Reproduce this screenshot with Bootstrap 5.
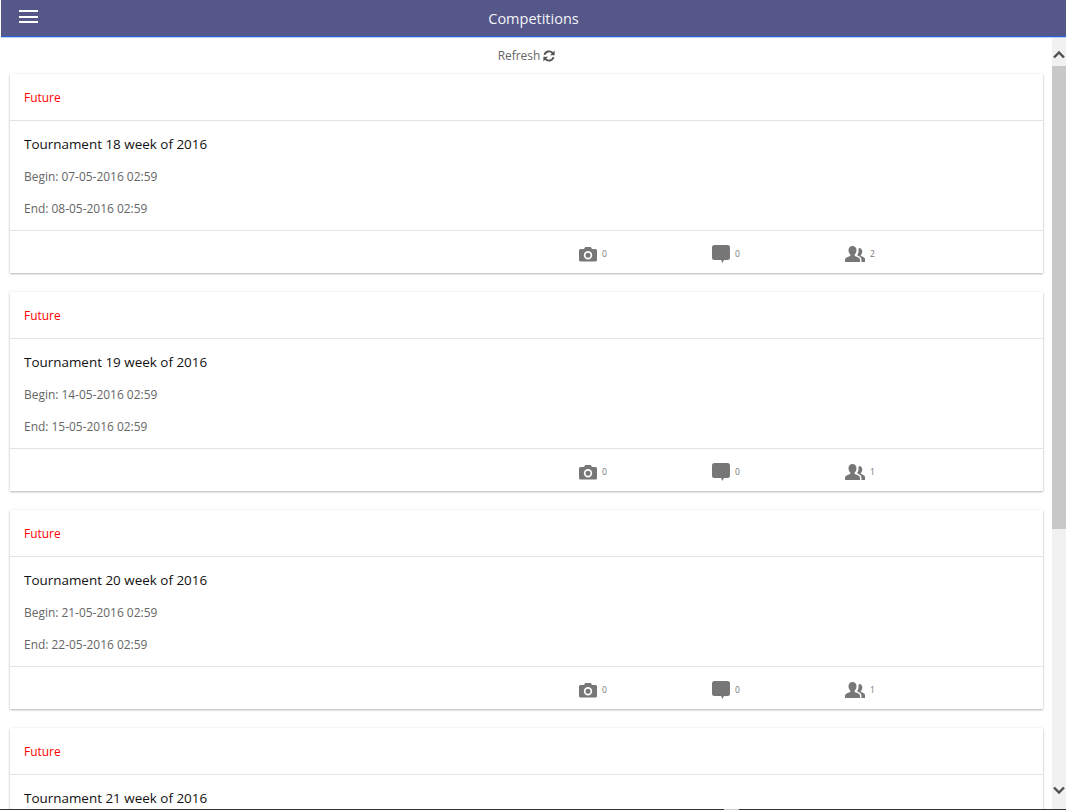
<!DOCTYPE html>
<html lang="en">
<head>
<meta charset="utf-8">
<title>Competitions</title>
<link href="https://cdn.jsdelivr.net/npm/bootstrap@5.3.0/dist/css/bootstrap.min.css" rel="stylesheet">
<style>
html,body{height:810px;overflow:hidden;background:#fff;}
body{font-family:"Open Sans","Noto Sans",sans-serif;font-size:11.95px;color:#666;position:relative;}
.appbar{height:37px;margin-left:1px;background:#555789;border-bottom:1px solid #2a62d2;box-shadow:0 1px 0 #b5d0f5;position:relative;z-index:2;}
.appbar-title{color:#f3f3f8;font-size:14.5px;line-height:37px;}
.burger{width:19px;height:13px;display:flex;flex-direction:column;justify-content:space-between;position:absolute;left:18px;top:10px;}
.burger span{display:block;height:2px;background:#fff;}
.shell{height:773px;}
.feed{overflow:hidden;min-width:0;padding:0 9px 0 10px;}
.refresh-row{height:37px;color:#666;}
.refresh-row svg{width:12px;height:12px;margin-left:3px;}
.comp{background:#fff;margin-bottom:18.7px;box-shadow:0 1px 2px rgba(0,0,0,.28),0 0 3px rgba(0,0,0,.05);}
.comp-status{height:47px;color:#f00;padding:2px 14px 0;border-bottom:1px solid #e4e4e4;}
.comp-main{height:110px;padding:0 14px;border-bottom:1px solid #e4e4e4;}
.comp-name{color:#111;font-size:13.45px;height:47px;padding-top:13px;line-height:20px;}
.comp-line{height:32px;line-height:18px;}
.comp-foot{height:42.3px;padding-left:569px;}
.stat{width:133px;font-size:8.5px;color:#777;padding-top:4px;}
.stat svg{width:18px;height:18px;margin-right:5px;fill:#777;flex:none;}
.stat svg.group-ico{width:20px;height:18px;margin-right:5px;}
.sbar{width:14px;flex:none;background:#f1f1f1;}
.sbar-top{height:29px;padding-top:6px;}
.sbar-bottom{height:36px;padding-bottom:4px;}
.sbar svg{width:12px;height:9px;}
.sbar-thumb{height:463px;background:#c8c8c8;}
.screen-edge{position:absolute;left:0;right:0;bottom:0;height:1px;background:linear-gradient(to right,#333 0,#333 724px,#ccc 724px,#ccc 739px,#333 739px,#333 1066px);z-index:3;}
</style>
</head>
<body>
<header class="appbar d-flex align-items-start justify-content-center">
  <div class="burger"><span></span><span></span><span></span></div>
  <div class="appbar-title">Competitions</div>
</header>
<div class="shell d-flex">
  <main class="feed flex-grow-1">
    <div class="refresh-row d-flex align-items-center justify-content-center">Refresh
      <svg viewBox="0 0 16 16"><path fill="none" stroke="#555" stroke-width="2.500" d="M2 6.500A6.200 6.200 0 0 1 12.800 4.200M14 9.500A6.200 6.200 0 0 1 3.200 11.800"/><path fill="#555" d="M15.500 .8V7H9.300ZM.5 15.200V9h6.200Z"/></svg>
    </div>
    <article class="comp">
      <div class="comp-status d-flex align-items-center">Future</div>
      <div class="comp-main"><div class="comp-name">Tournament 18 week of 2016</div><div class="comp-line">Begin: 07-05-2016 02:59</div><div class="comp-line">End: 08-05-2016 02:59</div></div>
      <div class="comp-foot d-flex">
        <div class="stat d-flex align-items-center"><svg viewBox="0 0 18 18"><path fill-rule="evenodd" d="M1.5 4H5l1.2-2h5.600L13 4h3.500A1.500 1.500 0 0 1 18 5.500V15a1.500 1.500 0 0 1-1.500 1.500h-15A1.500 1.500 0 0 1 0 15V5.500A1.500 1.500 0 0 1 1.500 4ZM9 6a4.200 4.200 0 1 0 0 8.400A4.200 4.200 0 0 0 9 6Zm0 1.700a2.500 2.500 0 1 1 0 5 2.500 2.500 0 0 1 0-5Z"/></svg>0</div>
        <div class="stat d-flex align-items-center"><svg viewBox="0 0 18 18"><path d="M2.500 0h13A2.500 2.500 0 0 1 18 2.500v10a2.500 2.500 0 0 1-2.500 2.500H12l-1.800 3-1-3H2.500A2.500 2.500 0 0 1 0 12.500v-10A2.500 2.500 0 0 1 2.500 0Z"/></svg>0</div>
        <div class="stat d-flex align-items-center"><svg class="group-ico" viewBox="0 0 20 18"><path d="M7.500 1c2.500 0 4 1.900 4 4.300 0 1.800-.8 3.400-1.800 4.300v1.300c2.800.8 5.300 2 5.300 3.600V17H0v-2.500c0-1.600 2.500-2.800 5.300-3.600V9.600C4.300 8.700 3.500 7.100 3.500 5.300 3.500 2.900 5 1 7.500 1ZM14 3c2 0 3.300 1.600 3.300 3.600 0 1.500-.6 2.800-1.500 3.600V11c2 .6 4.200 1.500 4.200 2.900V17h-3.600v-2.500c0-1.800-1.700-3-4-3.900V9.800c.8-1.200 1.200-2.800 1.200-4.500 0-.5 0-1-.2-1.500.6-.5 1.400-.8 2.600-.8Z"/></svg>2</div>
      </div>
    </article>
    <article class="comp">
      <div class="comp-status d-flex align-items-center">Future</div>
      <div class="comp-main"><div class="comp-name">Tournament 19 week of 2016</div><div class="comp-line">Begin: 14-05-2016 02:59</div><div class="comp-line">End: 15-05-2016 02:59</div></div>
      <div class="comp-foot d-flex">
        <div class="stat d-flex align-items-center"><svg viewBox="0 0 18 18"><path fill-rule="evenodd" d="M1.5 4H5l1.2-2h5.600L13 4h3.500A1.500 1.500 0 0 1 18 5.500V15a1.500 1.500 0 0 1-1.500 1.500h-15A1.500 1.500 0 0 1 0 15V5.500A1.500 1.500 0 0 1 1.500 4ZM9 6a4.200 4.200 0 1 0 0 8.400A4.200 4.200 0 0 0 9 6Zm0 1.700a2.500 2.500 0 1 1 0 5 2.500 2.500 0 0 1 0-5Z"/></svg>0</div>
        <div class="stat d-flex align-items-center"><svg viewBox="0 0 18 18"><path d="M2.500 0h13A2.500 2.500 0 0 1 18 2.500v10a2.500 2.500 0 0 1-2.500 2.500H12l-1.800 3-1-3H2.500A2.500 2.500 0 0 1 0 12.500v-10A2.500 2.500 0 0 1 2.500 0Z"/></svg>0</div>
        <div class="stat d-flex align-items-center"><svg class="group-ico" viewBox="0 0 20 18"><path d="M7.500 1c2.500 0 4 1.900 4 4.300 0 1.800-.8 3.400-1.800 4.300v1.300c2.800.8 5.300 2 5.300 3.600V17H0v-2.500c0-1.600 2.500-2.800 5.300-3.600V9.600C4.300 8.700 3.500 7.100 3.500 5.300 3.500 2.900 5 1 7.500 1ZM14 3c2 0 3.300 1.600 3.300 3.600 0 1.500-.6 2.800-1.500 3.600V11c2 .6 4.200 1.500 4.200 2.900V17h-3.600v-2.500c0-1.800-1.700-3-4-3.900V9.800c.8-1.200 1.200-2.800 1.200-4.500 0-.5 0-1-.2-1.500.6-.5 1.400-.8 2.600-.8Z"/></svg>1</div>
      </div>
    </article>
    <article class="comp">
      <div class="comp-status d-flex align-items-center">Future</div>
      <div class="comp-main"><div class="comp-name">Tournament 20 week of 2016</div><div class="comp-line">Begin: 21-05-2016 02:59</div><div class="comp-line">End: 22-05-2016 02:59</div></div>
      <div class="comp-foot d-flex">
        <div class="stat d-flex align-items-center"><svg viewBox="0 0 18 18"><path fill-rule="evenodd" d="M1.5 4H5l1.2-2h5.600L13 4h3.500A1.500 1.500 0 0 1 18 5.500V15a1.500 1.500 0 0 1-1.500 1.500h-15A1.500 1.500 0 0 1 0 15V5.500A1.500 1.500 0 0 1 1.500 4ZM9 6a4.200 4.200 0 1 0 0 8.400A4.200 4.200 0 0 0 9 6Zm0 1.700a2.500 2.500 0 1 1 0 5 2.500 2.500 0 0 1 0-5Z"/></svg>0</div>
        <div class="stat d-flex align-items-center"><svg viewBox="0 0 18 18"><path d="M2.500 0h13A2.500 2.500 0 0 1 18 2.500v10a2.500 2.500 0 0 1-2.500 2.500H12l-1.800 3-1-3H2.500A2.500 2.500 0 0 1 0 12.500v-10A2.500 2.500 0 0 1 2.500 0Z"/></svg>0</div>
        <div class="stat d-flex align-items-center"><svg class="group-ico" viewBox="0 0 20 18"><path d="M7.500 1c2.500 0 4 1.900 4 4.300 0 1.800-.8 3.400-1.800 4.300v1.300c2.800.8 5.300 2 5.300 3.600V17H0v-2.500c0-1.600 2.500-2.800 5.300-3.600V9.600C4.300 8.700 3.500 7.100 3.500 5.300 3.500 2.900 5 1 7.500 1ZM14 3c2 0 3.300 1.600 3.300 3.600 0 1.500-.6 2.800-1.500 3.600V11c2 .6 4.200 1.500 4.200 2.900V17h-3.600v-2.500c0-1.800-1.700-3-4-3.900V9.800c.8-1.200 1.200-2.800 1.200-4.500 0-.5 0-1-.2-1.500.6-.5 1.400-.8 2.600-.8Z"/></svg>1</div>
      </div>
    </article>
    <article class="comp">
      <div class="comp-status d-flex align-items-center">Future</div>
      <div class="comp-main"><div class="comp-name">Tournament 21 week of 2016</div></div>
    </article>
  </main>
  <aside class="sbar d-flex flex-column">
    <div class="sbar-top d-flex align-items-center justify-content-center"><svg viewBox="0 0 12 9"><path d="M1 7.500 6 2.500 11 7.500" fill="none" stroke="#505050" stroke-width="2.400"/></svg></div>
    <div class="sbar-thumb"></div>
    <div class="flex-grow-1"></div>
    <div class="sbar-bottom d-flex align-items-center justify-content-center"><svg viewBox="0 0 12 9"><path d="M1 1.500 6 6.500 11 1.500" fill="none" stroke="#505050" stroke-width="2.400"/></svg></div>
  </aside>
</div>
<div class="screen-edge"></div>
<script src="https://cdn.jsdelivr.net/npm/bootstrap@5.3.0/dist/js/bootstrap.bundle.min.js"></script>
</body>
</html>
